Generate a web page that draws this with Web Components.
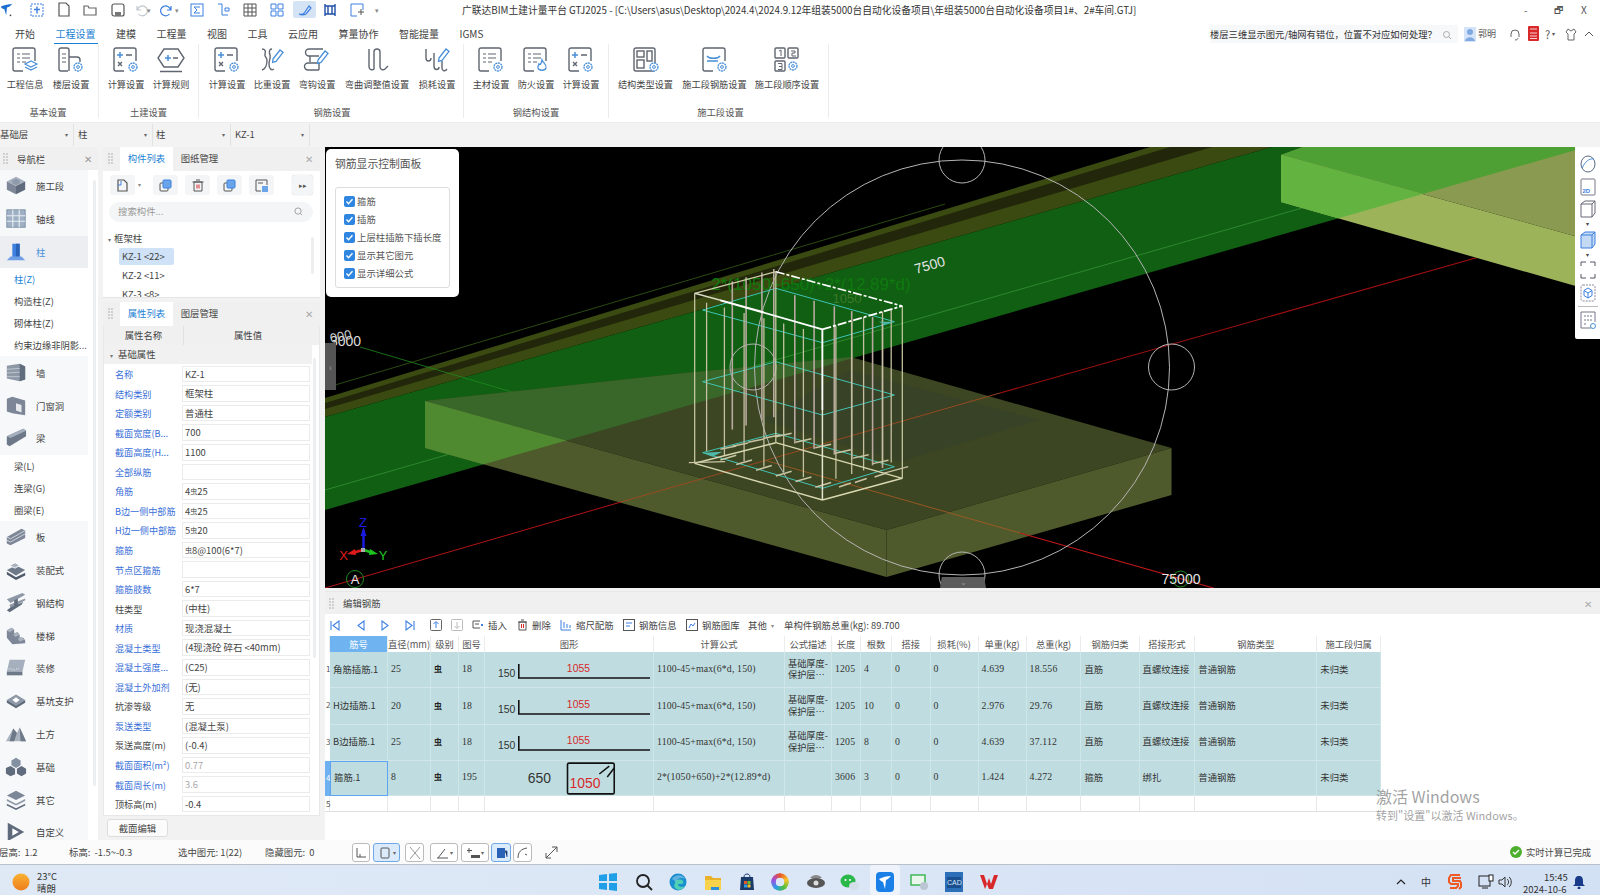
<!DOCTYPE html>
<html lang="zh">
<head>
<meta charset="utf-8">
<title>GTJ2025</title>
<style>
  html, body { margin: 0; padding: 0; height: 100%; overflow: hidden; background: #f2f2f2; }
  body { font: 9.4px "Noto Sans CJK SC", "Noto Sans", sans-serif; color: #444; }
</style>
</head>
<body>
<gtj-app></gtj-app>
<script>
// shared drawing bits
const GREY = '#5f6670', BLUE = '#4a90d9';
const gear = (x, y) => `<circle cx="${x}" cy="${y}" r="4" fill="#fff" stroke="${BLUE}" stroke-width="1.3" stroke-dasharray="2 .6"/><circle cx="${x}" cy="${y}" r="1.4" fill="none" stroke="${BLUE}"/>`;
const pen = (x, y) => `<path d="M${x} ${y}l7-9 3 2.4-7 9-3.4 1z" fill="#fff" stroke="${BLUE}" stroke-width="1.3"/>`;
const docBox = (w = 22) => `<path d="M${w - 10} 24H4a2 2 0 0 1-2-2V3a2 2 0 0 1 2-2h${w - 4}a2 2 0 0 1 2 2v11" fill="none" stroke="${GREY}" stroke-width="1.4"/>`;
const lines = `<path d="M6 7h3M11 7h8M6 11h3M11 11h8M6 15h3M11 15h4" stroke="${GREY}" stroke-width="1.2"/>`;
const calc = `<path d="M5 8h6M8 5v6" stroke="${BLUE}" stroke-width="1.5"/><path d="M14 8h6M6 15l4 4M10 15l-4 4" stroke="${GREY}" stroke-width="1.4"/>`;
const stroke = `fill="none" stroke="${GREY}" stroke-width="1.4"`;
const grip = `<svg class="gp" width="5" height="11" viewBox="0 0 5 11"><path d="M1 1h0M4 1h0M1 4h0M4 4h0M1 7h0M4 7h0M1 10h0M4 10h0" stroke="#999" stroke-width="1.4" stroke-linecap="round"/></svg>`;
const RIBBON_ICONS = {
  info: docBox() + lines + `<path d="M20 14l6 3-6 3-6-3zM14 20l6 3 6-3" fill="#fff" stroke="${BLUE}" stroke-width="1.2"/>`,
  floor: `<path d="M11 24H4a2 2 0 0 1-2-2V3a2 2 0 0 1 2-2h6a2 2 0 0 1 2 2v21M12 10h8a3 3 0 0 1 3 3v2" ${stroke}/><path d="M5 7h4M5 11h4M5 15h4" stroke="${GREY}" stroke-width="1.2"/>` + gear(21, 20),
  calc: docBox() + calc + gear(21, 20),
  rule: `<path d="M7 2h14l6 9-6 9H7L1 11z" ${stroke}/><path d="M8 11h6M11 8v6" stroke="${BLUE}" stroke-width="1.5"/><path d="M16 11h5M3 24.500h22" stroke="${GREY}" stroke-width="1.4"/>`,
  weight: `<path d="M4 2c3 0 4 2 3 5-1 3 2 3 2 6 0 3-1 9-5 10M14 2c-3 0-3 3-2 6s-1 5-1 9 2 7 5 5" ${stroke}/>` + pen(15, 12),
  hook: `<path d="M20 2H6a3 3 0 0 0 0 7h10M7 9v6M16 23H5a3 3 0 0 1 0-7h12M16 16v7" ${stroke}/>` + pen(15, 13),
  bend: `<path d="M6 2v18a3 3 0 0 0 5 2V5a3 3 0 1 1 6 0v15a3 3 0 0 0 5 2l3-3" ${stroke}/>`,
  loss: `<path d="M3 2v9c0 4 5 4 5 0M11 6v13c0 5 5 4 5 1M19 14v7c0 3 3 4 5 1" ${stroke}/>` + pen(16, 11),
  main: docBox() + lines + gear(21, 20),
  fire: docBox() + lines + `<path d="M20 13c1 3 5 4 4 8-1 3-7 3-8 0-.500-2 1-3 1-4 1 1 2 1 3-4z" fill="#fff" stroke="${BLUE}" stroke-width="1.3"/>`,
  struct: `<rect x="2" y="1" width="21" height="23" rx="2" ${stroke}/><rect x="5" y="4" width="7" height="6" ${stroke}/><rect x="15" y="4" width="5" height="10" ${stroke}/><rect x="5" y="13" width="7" height="8" ${stroke}/>` + gear(22, 20),
  seg: docBox() + `<path d="M6 9c2 3 11 3 13 0M6 14h11" stroke="${BLUE}" stroke-width="1.4" fill="none"/>` + gear(21, 20),
  order: `<rect x="2" y="1" width="10" height="10" rx="1" ${stroke}/><rect x="15" y="1" width="10" height="10" rx="1" ${stroke}/><rect x="2" y="14" width="10" height="10" rx="1" ${stroke}/><path d="M6 4l2-1v6M18 4h4v2h-3v3h4M5 16.500h4v3h-3M6 19.500h3v3H5" fill="none" stroke="${GREY}"/>` + gear(20, 19)
};

// isometric little pictures of the nav list
const iso = (top, l, r, d = '') => `<path d="M12 2l10 5-10 5L2 7z" fill="${top}"/><path d="M2 7l10 5v9L2 16z" fill="${l}"/><path d="M22 7l-10 5v9l10-5z" fill="${r}"/>${d}`;
const NAV_ICONS = {
  seg: iso('#a5afbd', '#7d8797', '#5f6a7c', '<path d="M8 6l4-2 4 2v3l-4 2-4-2z" fill="#8e9aaa"/>'),
  axis: '<rect x="2" y="2" width="20" height="19" fill="#9fb0c4" stroke="#7d8da3"/><path d="M2 8.500h20M2 14.500h20M8.500 2v19M15.500 2v19" stroke="#e8edf3" stroke-width="1.2"/>',
  col: '<path d="M8 3h8v15H8z" fill="#3d80e0"/><path d="M12 3h4v15h-4z" fill="#2a62b8"/><path d="M2 21l4-4h12l4 4z" fill="#6e9fe6"/>',
  wall: '<path d="M2 4l14-2 6 3v14l-6 2-14-3z" fill="#8d97a6"/><path d="M16 2l6 3v14l-6 2z" fill="#616c7d"/><path d="M2 8l14-1M2 12l14-1M2 16l14 0" stroke="#c2c9d3"/>',
  door: '<path d="M2 4l6-2v18l-6-2zM8 2l14 4v16L8 20z" fill="#7c8696"/><path d="M12 9l6 2v8l-6-2z" fill="#e6e9ee"/>',
  beam: '<path d="M2 10L20 2l3 2v6L5 21l-3-2z" fill="#6d7888"/><path d="M2 10L20 2l3 2L6 12z" fill="#a5afbd"/>',
  slab: '<path d="M2 12L18 3l4 2v8L6 21l-4-2z" fill="#7d8797"/><path d="M2 12l4 2 16-9M2 15.500l4 2 16-9" stroke="#d4d9e0" fill="none"/>',
  pre: '<path d="M2 12l10-5 10 5-10 6z" fill="#6d7888"/><path d="M5 7l6-3 5 3-5 3z" fill="#aab3bf" stroke="#fff"/><path d="M2 14l10 6 10-5v3l-10 5-10-6z" fill="#4f5a6b"/>',
  steel: '<path d="M2 8L19 1l3 2L6 12zM5 14L22 7v2L6 18z" fill="#8d97a6"/><path d="M10 9l4-2v8l-4 2zM2 20l4-3 14-6-2 3-13 8z" fill="#616c7d"/>',
  stair: '<path d="M2 6l5-3 3 2v4l4-1 2 3v3l4 0 2 3v3L8 21 2 14z" fill="#7d8797"/><path d="M2 6l5-3 3 2-5 3zM9 10l4-2 3 3-5 2zM14 15l4-2 3 3-5 2z" fill="#aab3bf"/>',
  fit: '<path d="M5 3h17l-3 13H2z" fill="#a5afbd"/><path d="M2 16h17v4H2z" fill="#6d7888"/><path d="M4 13h3M8 14h3M12 13h3" stroke="#e8edf3" stroke-dasharray="1 1"/>',
  pit: '<path d="M2 11l10-6 10 6-10 6z" fill="#8d97a6"/><path d="M8 11l4-3 4 3-4 3z" fill="#fff"/><path d="M2 11v3l10 6 10-6v-3l-10 6z" fill="#5f6a7c"/>',
  earth: '<path d="M1 20L9 6l4 5 3-6 7 15z" fill="#aab3bf"/><path d="M9 6l4 5-3 9H5zM16 5l7 15h-6z" fill="#6d7888"/>',
  base: '<path d="M12 2l5 3v5l-5 3-5-3V5z" fill="#8390a2"/><path d="M6 11l5 3v6l-5 2-5-3v-6zM18 11l5 3v5l-5 3-5-3v-5z" fill="#606c7e"/>',
  other: '<path d="M12 2l10 5-10 5L2 7z" fill="#7d8797"/><path d="M2 11l10 5 10-5v2l-10 5-10-5z" fill="#8e9aaa"/><path d="M2 16l10 5 10-5v2l-10 5-10-5z" fill="#5f6a7c"/>',
  custom: '<path d="M3 2l18 10L3 22z" fill="#5f6a7c"/><path d="M8 8l7 4-7 4z" fill="#fff"/>'
};

class Base extends HTMLElement {
  constructor() {
    super();
    this.attachShadow({ mode: 'open' });
  }
  connectedCallback() {
    this.shadowRoot.innerHTML = this.render();
  }
}
const attr = (o, n, d = '') => o.getAttribute(n) || d;

class GtjApp extends Base {
  render() {
    return `<style>
      :host { display: grid; width: 1600px; height: 895px; grid-template-rows: 22px 22px 78px 25px 693px 25px 30px; }
      .main { display: flex; gap: 5px; min-height: 0; }
      .mid { display: flex; flex-direction: column; width: 217px; gap: 4px; }
      .right { display: flex; flex-direction: column; flex: 1; gap: 3px; min-width: 0; }
    </style>
    <title-bar></title-bar>
    <ribbon-tabs></ribbon-tabs>
    <ribbon-bar>
      <rb-group label="基本设置" pad="2 4">
        <rb-item w="46" icon="info" label="工程信息"></rb-item>
        <rb-item w="46" icon="floor" label="楼层设置"></rb-item>
      </rb-group>
      <rb-group label="土建设置" pad="4.500 4.500">
        <rb-item w="45" icon="calc" label="计算设置"></rb-item>
        <rb-item w="45" icon="rule" label="计算规则"></rb-item>
      </rb-group>
      <rb-group label="钢筋设置" pad="5.500 3.500">
        <rb-item w="45" icon="calc" label="计算设置"></rb-item>
        <rb-item w="45" icon="weight" label="比重设置"></rb-item>
        <rb-item w="45" icon="hook" label="弯钩设置"></rb-item>
        <rb-item w="75" icon="bend" label="弯曲调整值设置"></rb-item>
        <rb-item w="45" icon="loss" label="损耗设置"></rb-item>
      </rb-group>
      <rb-group label="钢结构设置" pad="4.500 4">
        <rb-item w="45" icon="main" label="主材设置"></rb-item>
        <rb-item w="45" icon="fire" label="防火设置"></rb-item>
        <rb-item w="45" icon="calc" label="计算设置"></rb-item>
      </rb-group>
      <rb-group label="施工段设置" pad="6 6" shift="2.500">
        <rb-item w="62" icon="struct" label="结构类型设置"></rb-item>
        <rb-item w="76" icon="seg" label="施工段钢筋设置"></rb-item>
        <rb-item w="69" icon="order" label="施工段顺序设置"></rb-item>
      </rb-group>
    </ribbon-bar>
    <selector-bar></selector-bar>
    <div class="main">
      <nav-panel></nav-panel>
      <div class="mid">
        <comp-panel></comp-panel>
        <prop-panel></prop-panel>
      </div>
      <div class="right">
        <view-3d></view-3d>
        <rebar-editor></rebar-editor>
      </div>
    </div>
    <status-bar></status-bar>
    <task-bar></task-bar>`;
  }
}

const QUICK = [
  [37, `<rect x="2" y="2" width="12" height="12" fill="none" stroke="#3d80e0" stroke-dasharray="2 1"/><path d="M8 4.500v7M5 7.500h6" stroke="#3d80e0" stroke-width="1.4"/>`],
  [64, `<path d="M3 1h7l3 3v10H3z" fill="none" stroke="#555" stroke-width="1.2"/>`],
  [90, `<path d="M2 4h4l1 2h7v7H2z" fill="none" stroke="#666" stroke-width="1.2"/>`],
  [118, `<rect x="2" y="2" width="12" height="12" rx="2" fill="none" stroke="#555" stroke-width="1.2"/><path d="M5 10h6v4H5z" fill="#777"/>`],
  [141, `<path d="M4 4v4h4M4.500 8a5 5 0 1 1 1 4" fill="none" stroke="#c2c7cf" stroke-width="1.2"/>`],
  [167, `<path d="M12 4v4H8M11.500 8a5 5 0 1 0-1 4" fill="none" stroke="#3d80e0" stroke-width="1.2"/>`],
  [197, `<rect x="2" y="2" width="12" height="12" fill="none" stroke="#3d80e0"/><path d="M11 5H5l3 3-3 3h6" fill="none" stroke="#3d80e0"/>`],
  [223, `<path d="M3 2h4v11h6M10 6h4v3h-4z" fill="none" stroke="#3d80e0"/>`],
  [250, `<path d="M2 2h12v12H2zM2 6h12M2 10h12M6 2v12M10 2v12" fill="none" stroke="#555"/>`],
  [277, `<path d="M2 2h5v5H2zM9 2h5v5H9zM2 9h5v5H2zM9 9h5v5H9z" fill="none" stroke="#3d80e0"/>`],
  [304, `<path d="M3 12c3 1 5 0 6-2l4-6 2 2-5 6c-2 1-5 1-7 0z" fill="none" stroke="#3d80e0" stroke-width="1.2"/>`],
  [330, `<path d="M3 2v12M13 2v12M3 4h10M3 12h10M6 4v8M10 4v8" fill="none" stroke="#1f4fa8" stroke-width="1.4"/>`],
  [357, `<path d="M2 2h12v6M2 2v12h6" fill="none" stroke="#3d80e0"/><path d="M9 10h6M12 7v6" stroke="#555"/>`]
];
class TitleBar extends Base {
  render() {
    const btn = QUICK.map(q => `<svg style="left:${q[0] - 8}px" viewBox="0 0 16 16" width="16" height="16">${q[1]}</svg>`).join('');
    return `<style>
      :host { display: block; position: relative; background: #fff; height: 22px; }
      svg { position: absolute; top: 2px; }
      .act { position: absolute; left: 293px; top: 1px; width: 23px; height: 17px; background: #d5e4f5; border-radius: 2px; }
      .title { position: absolute; left: 462px; top: 3px; font-size: 9.750px; line-height: 14px; white-space: nowrap; color: #333; }
      .win { position: absolute; top: 3px; font-size: 10px; line-height: 13px; color: #555; }
      .c { position: absolute; top: 5px; font-size: 7px; color: #888; }
    </style>
    <div class="act"></div>
    <svg style="left:0" viewBox="0 0 16 16" width="14" height="16"><path d="M1 4c4-2 9-3 13-3l-3 3-3 1-1 9-2-7-3-1z" fill="#1b6fd0"/><circle cx="12" cy="14" r="1" fill="#444"/></svg>
    ${btn}
    <span class="c" style="left:147px">▾</span><span class="c" style="left:175px">▾</span><span class="c" style="left:375px">▾</span>
    <span class="title">广联达BIM土建计量平台 GTJ2025 - [C:\\Users\\asus\\Desktop\\2024.4\\2024.9.12年组装5000台自动化设备项目\\年组装5000台自动化设备项目1#、2#车间.GTJ]</span>
    <span class="win" style="left:1524px">-</span><span class="win" style="left:1554px">🗗</span><span class="win" style="left:1581px">X</span>`;
  }
}

class RibbonTabs extends Base {
  render() {
    const tabs = ['开始', '工程设置', '建模', '工程量', '视图', '工具', '云应用', '算量协作', '智能提量', 'IGMS'];
    return `<style>
      :host { display: flex; align-items: center; background: #fff; height: 22px; padding-left: 15px; font-size: 10px; color: #444; position: relative; }
      .tabs { display: flex; gap: 20.500px; flex: 1; align-items: center; height: 100%; }
      .t { position: relative; line-height: 22px; padding-top: 1px; box-sizing: border-box; height: 22px; white-space: nowrap; }
      .on { color: #1a7fd4; }
      .on::after { content: ""; position: absolute; left: -2px; right: -2px; bottom: 0; height: 1.500px; background: #1a7fd4; }
      .help { position: absolute; left: 1210px; top: 3px; height: 18px; width: 248px; background: #f7f8fa; font-size: 9.300px; line-height: 18px; color: #333; white-space: nowrap; }
      .r { position: absolute; top: 5px; font-size: 10px; line-height: 14px; color: #555; }
    </style>
    <div class="tabs">${tabs.map((t, i) => `<span class="t ${i === 1 ? 'on' : ''}">${t}</span>`).join('')}</div>
    <div class="help">楼层三维显示图元/轴网有错位，位置不对应如何处理？</div>
    <svg style="position:absolute;left:1442px;top:8px" width="10" height="10" viewBox="0 0 10 10"><circle cx="4.500" cy="4.500" r="3" fill="none" stroke="#aaa"/><path d="M7 7l2 2" stroke="#aaa"/></svg>
    <svg style="position:absolute;left:1464px;top:5px" width="12" height="15" viewBox="0 0 12 15"><rect width="12" height="15" fill="#d5e4f8"/><circle cx="6" cy="5" r="3" fill="#7fa9e0"/><path d="M1 14c1-5 9-5 10 0z" fill="#7fa9e0"/></svg>
    <span class="r" style="left:1478px;font-size:9px">郭明</span>
    <svg style="position:absolute;left:1509px;top:6px" width="12" height="13" viewBox="0 0 12 13"><path d="M2 9V6a4 4 0 0 1 8 0v3M9 10c0 1-1 2-3 2" fill="none" stroke="#666"/></svg>
    <svg style="position:absolute;left:1528px;top:4px" width="11" height="15" viewBox="0 0 11 15"><rect width="11" height="15" rx="1" fill="#d8282a"/><path d="M2 3h7M2 7h7M2 10h7M2 12.500h7" stroke="#fff" stroke-width=".8"/></svg>
    <span class="r" style="left:1545px;font-size:11px">?</span><span class="r" style="left:1552px;font-size:6px">▾</span>
    <svg style="position:absolute;left:1565px;top:6px" width="12" height="13" viewBox="0 0 12 13"><path d="M3 1l3 2 3-2 2 3-2 2v6H3V6L1 4z" fill="none" stroke="#666"/></svg>
    <svg style="position:absolute;left:1584px;top:8px" width="10" height="7" viewBox="0 0 10 7"><path d="M1 6l4-4 4 4" fill="none" stroke="#555"/></svg>`;
  }
}

class RibbonBar extends Base {
  render() {
    return `<style>:host { display: flex; background: #fff; height: 78px; }</style><slot></slot>`;
  }
}

class RbGroup extends Base {
  render() {
    const [l, r] = attr(this, 'pad', '4 4').split(' ');
    return `<style>
      :host { display: grid; grid-template-rows: 61px 13px; height: 74px; border-right: 1px solid #ececec; padding: 0 ${r}px 0 ${l}px; box-sizing: content-box; }
      .items { display: flex; }
      .lab { text-align: center; font-size: 9.300px; line-height: 15px; color: #555; white-space: nowrap; padding-left: ${attr(this, 'shift', '0') * 2}px; }
    </style>
    <div class="items"><slot></slot></div>
    <div class="lab">${attr(this, 'label')}</div>`;
  }
}

class RbItem extends Base {
  render() {
    return `<style>
      :host { display: flex; flex-direction: column; align-items: center; width: ${attr(this, 'w', '45')}px; }
      svg { display: block; margin-top: 3px; }
      span { margin-top: 4px; font-size: 9.200px; line-height: 14px; white-space: nowrap; color: #444; }
    </style>
    <svg viewBox="0 0 28 26" width="28" height="26">${RIBBON_ICONS[attr(this, 'icon')]}</svg>
    <span>${attr(this, 'label')}</span>`;
  }
}

class SelectorBar extends Base {
  render() {
    const cells = [['基础层', 74, -1], ['柱', 79, 4], ['柱', 78, 3], ['KZ-1', 79, 4]];
    return `<style>
      :host { display: flex; background: #f3f3f3; height: 25px; align-items: center; font-size: 9.400px; border-top: 1px solid #ededed; box-sizing: border-box; }
      .c { display: flex; align-items: center; justify-content: space-between; height: 22px; box-sizing: border-box; border-right: 1px solid #e2e2e2; padding-right: 5px; padding-bottom: 2px; }
      i { font-style: normal; font-size: 6px; color: #666; }
    </style>
    ${cells.map(c => `<div class="c" style="width:${c[1]}px;padding-left:${c[2]}px"><span>${c[0]}</span><i>▾</i></div>`).join('')}`;
  }
}

class NavPanel extends Base {
  render() {
    const rows = [
      ['seg', '施工段'], ['axis', '轴线'], ['col', '柱', 1],
      [0, '柱(Z)', 1], [0, '构造柱(Z)'], [0, '砌体柱(Z)'], [0, '约束边缘非阴影...'],
      ['wall', '墙'], ['door', '门窗洞'], ['beam', '梁'],
      [0, '梁(L)'], [0, '连梁(G)'], [0, '圈梁(E)'],
      ['slab', '板'], ['pre', '装配式'], ['steel', '钢结构'], ['stair', '楼梯'], ['fit', '装修'],
      ['pit', '基坑支护'], ['earth', '土方'], ['base', '基础'], ['other', '其它'], ['custom', '自定义']
    ];
    const list = rows.map(r => r[0]
      ? `<div class="it ${r[2] ? 'on' : ''}"><svg viewBox="0 0 24 24" width="22" height="22">${NAV_ICONS[r[0]]}</svg><span>${r[1]}</span></div>`
      : `<div class="sub ${r[2] ? 'blue' : ''}">${r[1]}</div>`).join('');
    return `<style>
      :host { display: flex; flex-direction: column; width: 98px; background: #fff; height: 693px; overflow: hidden; }
      .hd { display: flex; align-items: center; height: 23px; background: #f0f0f0; flex: none; }
      .gp { margin: 0 9px 0 3px; flex: none; }
      .x { margin-left: auto; margin-right: 6px; color: #999; font-size: 10px; }
      .body { display: flex; flex: 1; min-height: 0; }
      .list { width: 88px; overflow: hidden; }
      .it { height: 32.800px; display: flex; align-items: center; background: #f7f8fa; color: #444; }
      .it svg { margin: 0 9px 0 5px; flex: none; }
      .on { background: #eceef2; }
      .on span { color: #4a90d9; }
      .sub { height: 22px; line-height: 22px; padding-left: 14px; white-space: nowrap; background: #fff; font-size: 9.300px; }
      .blue { color: #1a7fd4; }
      .track { position: relative; flex: 1; }
      .track::after { content: ""; position: absolute; left: 5px; width: 3px; top: 10px; height: 606px; background: #eceef0; border-radius: 2px; }
    </style>
    <div class="hd">${grip}<span>导航栏</span><span class="x">✕</span></div>
    <div class="body"><div class="list">${list}</div><div class="track"></div></div>`;
  }
}

// header with grip, two tabs and a close cross; the panels below use it
class PanelHead extends Base {
  render() {
    return `<style>
      :host { display: flex; align-items: stretch; height: 24px; background: #f0f0f0; font-size: 9.400px; flex: none; }
      .gp { margin: 6px 7px 0 5px; flex: none; }
      .t { width: 53px; text-align: center; line-height: 23px; }
      .on { background: #fff; color: #1a7fd4; }
      .x { margin-left: auto; margin-right: 7px; color: #aaa; font-size: 10px; line-height: 23px; }
    </style>
    ${grip}<div class="t on">${attr(this, 'a')}</div><div class="t">${attr(this, 'b')}</div><span class="x">✕</span>`;
  }
}

function tool(t) {
  return `<svg width="13" height="13" viewBox="0 0 13 13">${t}</svg>`;
}

class CompPanel extends Base {
  render() {
    const tools = [
      `<path d="M2 1h6l3 3v8H2z" fill="none" stroke="#555" stroke-width="1.200"/><path d="M2 6h3V2" stroke="#3d80e0" fill="none"/>`,
      `<rect x="1" y="4" width="8" height="8" rx="1" fill="none" stroke="#555"/><rect x="4" y="1" width="8" height="8" rx="1" fill="#6aa5ea" stroke="#3d80e0"/>`,
      `<path d="M3 3h8v9H3zM1.500 3h11M5 1h4" fill="none" stroke="#555"/><path d="M6 5.500v4M8 5.500v4" stroke="#d8282a"/>`,
      `<rect x="1" y="4" width="8" height="8" rx="1" fill="none" stroke="#555"/><rect x="4" y="1" width="8" height="8" rx="1" fill="#6aa5ea" stroke="#3d80e0"/>`,
      `<path d="M1 1h11v5M1 1v11h5M3 4h5" fill="none" stroke="#555"/><rect x="7" y="7" width="6" height="6" fill="#6aa5ea"/>`
    ];
    return `<style>
      :host { display: flex; flex-direction: column; height: 151px; background: #fff; overflow: hidden; border-bottom: 1px solid #e5e5e5; box-sizing: border-box; position: relative; }
      .bar { display: flex; height: 20px; margin: 4px 0 0 7px; flex: none; }
      .b { display: flex; align-items: center; justify-content: center; width: 25px; height: 20px; background: #f4f5f6; border-radius: 3px; flex: none; }
      .cr { width: 18px; flex: none; font-size: 6px; color: #888; line-height: 20px; padding-left: 3px; box-sizing: border-box; }
      .s { height: 19.500px; margin: 7px 7px 0 6px; background: #f4f5f6; border-radius: 10px; color: #999; line-height: 19px; padding-left: 9px; position: relative; flex: none; }
      .s svg { position: absolute; right: 10px; top: 5px; }
      .tree { margin-top: 9px; }
      .g { padding-left: 5px; line-height: 14px; }
      .g i { font-style: normal; font-size: 6px; color: #777; margin-right: 3px; }
      .n { height: 16.500px; line-height: 16.500px; margin: 2.500px 0 0 16px; width: 55px; padding-left: 3px; box-sizing: border-box; border-radius: 2px; white-space: nowrap; }
      .sel { background: #cfe2f7; margin-top: 1.500px; }
      .n.last { height: 8px; line-height: 8px; margin-top: 6px; }
      .thumb { position: absolute; right: 6px; top: 90px; width: 3px; height: 37px; background: #eceef0; border-radius: 2px; }
    </style>
    <panel-head a="构件列表" b="图纸管理"></panel-head>
    <div class="bar">
      <div class="b">${tool(tools[0])}</div><span class="cr">▾</span>
      <div class="b" style="margin-right:7px">${tool(tools[1])}</div>
      <div class="b" style="margin-right:7px">${tool(tools[2])}</div>
      <div class="b" style="margin-right:7px">${tool(tools[3])}</div>
      <div class="b" style="margin-right:18px">${tool(tools[4])}</div>
      <div class="b" style="width:21px;font-size:7px;color:#555;box-shadow:0 0 1px #bbb">▸▸</div>
    </div>
    <div class="s">搜索构件...<svg width="9" height="9" viewBox="0 0 10 10"><circle cx="4.500" cy="4.500" r="3.500" fill="none" stroke="#999"/><path d="M7 7l2 2" stroke="#999"/></svg></div>
    <div class="tree">
      <div class="g"><i>▾</i>框架柱</div>
      <div class="n sel">KZ-1 &lt;22&gt;</div>
      <div class="n">KZ-2 &lt;11&gt;</div>
      <div class="n last">KZ-3 &lt;8&gt;</div>
    </div>
    <div class="thumb"></div>`;
  }
}

class PropPanel extends Base {
  render() {
    const rows = [
      ['名称', 'KZ-1', 'b'], ['结构类别', '框架柱', 'b'], ['定额类别', '普通柱', 'b'], ['截面宽度(B...', '700', 'b'],
      ['截面高度(H...', '1100', 'b'], ['全部纵筋', '', 'b'], ['角筋', '4<s>虫</s>25', 'b'], ['B边一侧中部筋', '4<s>虫</s>25', 'b'],
      ['H边一侧中部筋', '5<s>虫</s>20', 'b'], ['箍筋', '<s>虫</s>8@100(6*7)', 'b'], ['节点区箍筋', '', 'b'], ['箍筋肢数', '6*7', 'b'],
      ['柱类型', '(中柱)', ''], ['材质', '现浇混凝土', 'b'], ['混凝土类型', '(4现浇砼 碎石 &lt;40mm)', 'b'], ['混凝土强度...', '(C25)', 'b'],
      ['混凝土外加剂', '(无)', 'b'], ['抗渗等级', '无', ''], ['泵送类型', '(混凝土泵)', 'b'], ['泵送高度(m)', '(-0.4)', ''],
      ['截面面积(m²)', '0.77', 'b g'], ['截面周长(m)', '3.6', 'b g'], ['顶标高(m)', '-0.4', '']
    ];
    return `<style>
      :host { display: flex; flex-direction: column; flex: 1; min-height: 0; background: #f2f2f2; }
      .box { height: 490px; background: #fff; position: relative; border: 1px solid #e8e8e8; border-top: 0; box-sizing: border-box; flex: none; }
      .hr { display: grid; grid-template-columns: 79px 129px; height: 19px; background: #f0f0f0; line-height: 19px; text-align: center; color: #444; }
      .hr div + div { border-left: 1px solid #e2e2e2; }
      .sec { width: 208px; height: 19.300px; background: #f1f1f1; line-height: 18px; padding-left: 6px; box-sizing: border-box; }
      .sec i { font-style: normal; font-size: 6px; color: #777; margin-right: 5px; }
      .row { display: grid; grid-template-columns: 78px 127.500px; height: 19.550px; align-items: center; }
      .n { padding-left: 11px; white-space: nowrap; font-size: 9.100px; }
      .b .n { color: #3a6fd8; }
      .v { height: 16.500px; border: 1px solid #ebebeb; line-height: 15px; padding-left: 2px; box-sizing: border-box; font-size: 9.400px; white-space: nowrap; overflow: hidden; }
      .g .v { color: #aaa; }
      s { text-decoration: none; font-size: 7px; position: relative; top: -1px; }
      .thumb { position: absolute; right: 3px; top: 32px; width: 3px; height: 300px; background: #eceef0; border-radius: 2px; }
      .btn { margin: 3px 0 0 4px; width: 61px; height: 18px; border: 1px solid #ddd; border-radius: 3px; background: #fbfbfb; text-align: center; line-height: 17px; box-sizing: border-box; }
    </style>
    <panel-head a="属性列表" b="图层管理"></panel-head>
    <div class="box">
      <div class="hr"><div>属性名称</div><div>属性值</div></div>
      <div class="sec"><i>▾</i>基础属性</div>
      ${rows.map(r => `<div class="row ${r[2]}"><div class="n">${r[0]}</div><div class="v">${r[1]}</div></div>`).join('')}
      <div class="thumb"></div>
    </div>
    <div class="btn">截面编辑</div>`;
  }
}

class View3d extends Base {
  render() {
    // the source of these numbers is the zoomed crops: px/py turn crop coordinates into page ones
    const px = x => +(325 + x / 2.529).toFixed(1), py = y => +(140 + y / 3).toFixed(1);
    const pts = a => a.map(p => p.join(',')).join(' ');
    const greenBeam = pts([[325, 417], [1272, 147], [1600, 147], [1600, 143], [325, 510]]);
    const poly = (a, fill, extra = '') => `<polygon points="${pts(a)}" fill="${fill}" ${extra}/>`;
    const line = (x1, y1, x2, y2, c, w = 1, extra = '') => `<line x1="${x1}" y1="${y1}" x2="${x2}" y2="${y2}" stroke="${c}" stroke-width="${w}" ${extra}/>`;

    // slab: faces over black and, clipped, the lighter part over the beam
    const slabTop = [[425, 401], [685, 373], [851, 357], [1171.5, 448], [886.5, 530]];
    const slabL = [[425, 401], [886.5, 530], [886.5, 577], [425, 448]];
    const slabR = [[886.5, 530], [1171.5, 448], [1171.5, 495], [886.5, 577]];
    const boxFront = [[1281, 155], [1600, 243], [1600, 293], [1281, 202]];
    const boxTop = [[1281, 155], [1303, 147], [1600, 147], [1600, 243]];

    let cage = '';
    const P = [[935, 460], [1140, 395], [1460, 498], [1258, 568]].map(p => [px(p[0]), py(p[1])]);
    const B = [[935, 970], [1140, 908], [1460, 1015], [1258, 1080]].map(p => [px(p[0]), py(p[1])]);
    const loop = (a, c, w) => a.map((p, i) => line(p[0], p[1], a[(i + 1) % 4][0], a[(i + 1) % 4][1], c, w)).join('');
    // stirrups at three heights
    [[[955, 510], [1140, 445], [1440, 545], [1258, 608]], [[955, 725], [1140, 665], [1440, 765], [1258, 825]], [[955, 938], [1140, 880], [1440, 980], [1258, 1045]]].forEach(r => {
      cage += loop(r.map(p => [px(p[0]), py(p[1])]), '#3fc4b4', 1);
    });
    // bars behind
    [1030, 1065, 1105, 1135, 1188, 1237, 1288, 1332, 1385, 1410].forEach(x => {
      const top = x < 1140 ? 445 - (x - 955) * 0.35 : 445 + (x - 1140) * 0.33;
      cage += line(px(x), py(top + 5), px(x), py(top + 450), '#b8a8a0', 1.6);
    });
    // bars in front
    [965, 1010, 1060, 1110, 1160, 1210].forEach(x => {
      const t = 510 + (x - 955) * 0.32;
      cage += line(px(x), py(t - 25), px(x), py(t + 420), '#c4c0a0', 1.3);
    });
    [1292, 1332, 1362, 1410, 1432].forEach(x => {
      const t = 608 - (x - 1258) * 0.35;
      cage += line(px(x), py(t - 40), px(x), py(t + 420), '#c4c0a0', 1.3);
    });
    // hooks at the foot of the bars
    [1000, 1040, 1090, 1140, 1190, 1240].forEach(x => {
      const y = 960 + (x - 1000) * 0.34;
      cage += line(px(x), py(y), px(x + 40), py(y - 14), '#c8c4a4', 1.6);
    });
    [1300, 1340, 1390].forEach(x => {
      const y = 1055 - (x - 1258) * 0.33;
      cage += line(px(x), py(y), px(x + 30), py(y - 12), '#c8c4a4', 1.6);
    });
    [1000, 1030, 1070, 1110, 1140, 1190, 1240, 1290, 1335, 1385].forEach(x => {
      const y = x < 1140 ? 928 - (x - 1000) * 0.3 : 890 + (x - 1140) * 0.33;
      cage += line(px(x), py(y), px(x + 40), py(y - 10), '#c8c4a4', 1.4);
    });
    cage += poly([[px(955), py(938)], [px(1005), py(935)], [px(980), py(950)]], '#4fb8a8');
    cage += poly([[px(1400), py(545)], [px(1440), py(545)], [px(1415), py(553)]], '#4fb8a8');
    // outer box
    cage += loop(B, '#d8d8b0', 1.4);
    [0, 1, 2, 3].forEach(i => { cage += line(P[i][0], P[i][1], B[i][0], B[i][1], i === 3 ? '#e4e4d0' : '#cfcfa8', i === 3 ? 1.500 : 1.200); });
    cage += line(P[0][0], P[0][1], P[1][0], P[1][1], '#cfcfa8', 1.3);
    cage += line(P[0][0], P[0][1], px(1110), py(516), '#d8d8c4', 1.4) + line(px(1000), py(481), P[3][0], P[3][1], '#fff', 1.8);
    cage += line(P[3][0], P[3][1], P[2][0], P[2][1], '#fff', 1.8, 'stroke-dasharray="9 2 3 2"');
    cage += line(P[1][0], P[1][1], P[2][0], P[2][1], '#fff', 1.6, 'stroke-dasharray="9 2 3 2"');
    cage += line(P[3][0], P[3][1], px(1258), py(810), '#fff', 1.6);
    // outrigger ends on the foot
    cage += line(px(920), py(968), px(1012), py(965), '#c8c4a4', 1.2) + line(px(1412), py(1000), px(1475), py(980), '#c8c4a4', 1.2);

    const circ = (x, y, r, c = '#b4b4b4', w = 1) => `<ellipse cx="${x}" cy="${y}" rx="${r}" ry="${r}" fill="none" stroke="${c}" stroke-width="${w}"/>`;
    const checks = ['箍筋', '插筋', '上层柱插筋下插长度', '显示其它图元', '显示详细公式'];

    return `<style>
      :host { display: block; position: relative; height: 441px; background: #000; overflow: hidden; }
      svg.scene { display: block; }
      .ctrl { position: absolute; left: 1px; top: 1.500px; width: 133px; height: 148px; background: #fff; border-radius: 5px; box-sizing: border-box; padding: 7px 9px 0 9px; }
      .ctrl h4 { margin: 0; font-size: 10.800px; font-weight: 400; line-height: 15px; color: #555; }
      .grp { margin-top: 16.500px; height: 101px; border: 1px solid #ddd; border-radius: 3px; box-sizing: border-box; padding: 4px 0 0 7.500px; }
      .ck { display: flex; align-items: center; height: 18px; font-size: 9.400px; color: #555; white-space: nowrap; gap: 2.500px; }
      .ck b { width: 11px; height: 11px; flex: none; background: #2e86e0; border-radius: 2px; }
      .ck svg { display: block; }
      .tb { position: absolute; left: 1250px; top: 0; width: 25px; height: 192px; background: #fff; border-radius: 0 0 0 2px; display: flex; flex-direction: column; align-items: center; }
      .tb svg { flex: none; }
      .tb i { font-style: normal; font-size: 6px; color: #444; line-height: 10px; }
      .tb hr { width: 20px; margin: 3px 0; border: 0; border-top: 1px solid #bbb; }
      .lt { position: absolute; left: 0; top: 196px; width: 11px; height: 47px; background: #555; color: #999; font-size: 10px; line-height: 47px; text-align: center; }
      .bt { position: absolute; left: 615px; top: 430px; width: 46px; height: 11px; background: #5c5c5c; color: #999; font-size: 8px; line-height: 10px; text-align: center; clip-path: polygon(4% 0, 96% 0, 100% 100%, 0 100%); }
    </style>
    <svg class="scene" viewBox="325 147 1275 441" width="1275" height="441">
      <defs>
        <clipPath id="overGreen"><polygon points="${greenBeam}"/></clipPath>
      </defs>
      ${poly([[325, 398], [1150, 147], [1272, 147], [325, 417]], '#3a4a10')}
      ${poly([[325, 403], [1170, 147], [1212, 147], [325, 409]], '#22260a')}
      ${line(325, 388, 945, 204, '#3f6a1a', .7)}
      ${poly(greenBeam.split(' ').map(s => s.split(',')), '#115f13')}
      ${line(325, 490, 1302, 208, '#3a9a3a', .7)}
      ${line(360, 347, 870, 498, '#1f8a1f', .8)}
      ${line(590, 405, 590, 421, '#2f9a2f', .8)}${line(582, 413, 598, 413, '#2f9a2f', .8)}
      ${poly(slabTop, '#3d4622')}
      <g clip-path="url(#overGreen)">${poly(slabTop, '#39672a')}</g>
      ${poly([[850, 370], [1040, 420], [900, 462], [760, 420]], '#35402a', 'opacity=".55"')}
      ${poly(slabL, '#4f5a2c')}${poly(slabR, '#4f5a2c')}
      <g clip-path="url(#overGreen)">${poly(slabL, '#4f8a30')}${poly(slabR, '#4f8a30')}</g>
      ${line(325, 588, 621, 502, '#b01414', 1)}${line(621, 502, 1000, 393, '#a04a20', .9)}${line(1000, 393, 1479, 257, '#a01010', 1.1)}
      ${line(764, 460, 1020, 533, '#a05a24', .9)}${line(1020, 533, 1213.600, 588, '#c01818', 1.1)}
      ${poly(boxTop, '#8a9a50')}<g clip-path="url(#overGreen)">${poly(boxTop, '#4fa034')}</g>
      ${poly(boxFront, '#9cb35a')}<g clip-path="url(#overGreen)">${poly(boxFront, '#62b340')}</g>
      ${circ(962, 367.500, 207.500)}
      ${circ(962, 160, 23)}${circ(1171.500, 367, 23)}${circ(753, 367, 23)}${circ(962, 575, 23)}
      <text x="811" y="290" text-anchor="middle" font-size="17" fill="#0e7a0e" font-family="Liberation Sans">2*(1050+650)+2*(12.89*d)</text>
      <text x="847" y="303" text-anchor="middle" font-size="13" fill="#3d7a2a" font-family="Liberation Sans">1050</text>
      ${cage}
      <text transform="translate(916 274) rotate(-16)" font-size="14" fill="#e4e4e4" font-family="Liberation Sans">7500</text>
      <text x="330" y="346" font-size="14" fill="#ddd" font-family="Liberation Sans">3000</text>
      <text transform="translate(331 343) rotate(-12)" font-size="13" fill="#ccc" font-family="Liberation Sans">000</text>
      ${circ(1180.700, 579, 8, '#1f8a1f')}
      <text x="1181" y="584" text-anchor="middle" font-size="14" fill="#e4e4e4" font-family="Liberation Sans">75000</text>
      ${circ(355, 579, 8.500, '#1f8a1f')}
      <text x="355" y="584" text-anchor="middle" font-size="13" fill="#e8e8e8" font-family="Liberation Sans">A</text>
      <!-- axis gizmo -->
      <path d="M363.500 550V530" stroke="#1a1ae0" stroke-width="2.500"/><path d="M360.500 536l3-9 3 9z" fill="#1a1ae0"/>
      <path d="M363 550l-11 3" stroke="#e01a1a" stroke-width="2.500"/><path d="M355 549l-8 5 9 1z" fill="#e01a1a"/>
      <path d="M364 550l9 3" stroke="#1fc41f" stroke-width="2.500"/><path d="M370 549l8 5-9 1z" fill="#1fc41f"/>
      <rect x="361" y="548" width="4" height="4" fill="#aaa"/>
      <text x="363" y="527" text-anchor="middle" font-size="13" fill="#1a1ae0" font-family="Liberation Sans">Z</text>
      <text x="343.500" y="560" text-anchor="middle" font-size="13" fill="#e01a1a" font-family="Liberation Sans">X</text>
      <text x="383" y="560" text-anchor="middle" font-size="13" fill="#1fc41f" font-family="Liberation Sans">Y</text>
    </svg>
    <div class="lt">‹</div>
    <div class="bt">⌄</div>
    <div class="ctrl">
      <h4>钢筋显示控制面板</h4>
      <div class="grp">
        ${checks.map(c => `<div class="ck"><b><svg width="11" height="11" viewBox="0 0 11 11"><path d="M2.500 5.500l2 2.200 4-4.400" fill="none" stroke="#fff" stroke-width="1.400"/></svg></b>${c}</div>`).join('')}
      </div>
    </div>
    <div class="tb">
      <svg style="margin-top:7px" width="18" height="20" viewBox="0 0 18 20"><ellipse cx="9" cy="10" rx="7" ry="8" fill="none" stroke="#5a6a80"/><path d="M3 14C6 8 10 4 15 5" fill="none" stroke="${BLUE}"/></svg>
      <svg style="margin-top:3px" width="18" height="20" viewBox="0 0 18 20"><rect x="2" y="2" width="14" height="16" rx="1" fill="none" stroke="#778"/><text x="3.500" y="16" font-size="6" fill="#3d80e0" font-family="Liberation Sans" font-weight="700">2D</text></svg>
      <svg style="margin-top:2px" width="18" height="20" viewBox="0 0 18 20"><path d="M2 5l4-3h10v12l-3 4H2zM2 5h11v13M13 5l3-3" fill="none" stroke="#667"/></svg>
      <i>▾</i>
      <svg style="margin-top:1px" width="18" height="20" viewBox="0 0 18 20"><path d="M2 5l4-3h10v12l-3 4H2z" fill="#c4d9f4" stroke="#3d80e0"/><path d="M2 5h11v13M13 5l3-3" fill="none" stroke="#3d80e0"/></svg>
      <i>▾</i>
      <svg width="18" height="20" viewBox="0 0 18 20"><path d="M2 6V2h5M11 2h5v4M16 14v4h-5M7 18H2v-4" fill="none" stroke="#556"/></svg>
      <svg style="margin-top:3px" width="18" height="20" viewBox="0 0 18 20"><rect x="2" y="2" width="14" height="16" rx="2" fill="none" stroke="#889" stroke-dasharray="2 1"/><path d="M9 5l4 2.500v5L9 15l-4-2.500v-5zM5 7.500l4 2.500 4-2.500M9 10v5" fill="none" stroke="#3d80e0"/></svg>
      <hr>
      <svg width="18" height="20" viewBox="0 0 18 20"><path d="M12 18H2V2h14v10" fill="none" stroke="#778"/><path d="M5 6h8M5 10h8M5 14h3" stroke="#778" stroke-dasharray="2 1"/><circle cx="14" cy="16" r="2.500" fill="none" stroke="${BLUE}"/></svg>
    </div>`;
  }
}

class RebarEditor extends Base {
  render() {
    const cols = [5, 58, 43, 28, 26, 169, 131, 47, 29, 31, 38.6, 48, 48, 54.8, 58.2, 55.7, 122.1, 63.6];
    const head = ['', '筋号', '直径(mm)', '级别', '图号', '图形', '计算公式', '公式描述', '长度', '根数', '搭接', '损耗(%)', '单重(kg)', '总重(kg)', '钢筋归类', '搭接形式', '钢筋类型', '施工段归属'];
    const shape = `<svg width="169" height="36" viewBox="0 0 169 36"><text x="13" y="25" font-size="10.500" fill="#333" font-family="Liberation Sans">150</text><path d="M34 12v14h132" fill="none" stroke="#111" stroke-width="1.600"/><text x="94" y="20" text-anchor="middle" font-size="10.500" fill="#d8282a" font-family="Liberation Sans">1055</text></svg>`;
    const stir = `<svg width="169" height="36" viewBox="0 0 169 36"><text x="43" y="23.500" font-size="14" fill="#333" font-family="Liberation Sans">650</text><rect x="83" y="3" width="47" height="31" rx="1.500" fill="none" stroke="#111" stroke-width="1.600"/><path d="M115 14l10-8M123 17l7-9" stroke="#111" stroke-width="1.500"/><text x="85" y="28.500" font-size="14" fill="#d8282a" font-family="Liberation Sans">1050</text></svg>`;
    const D = '基础厚度-<br>保护层…', G = '<s>虫</s>';
    const rows = [
      ['1', '角筋插筋.1', '25', G, '18', shape, '1100-45+max(6*d, 150)', D, '1205', '4', '0', '0', '4.639', '18.556', '直筋', '直螺纹连接', '普通钢筋', '未归类'],
      ['2', 'H边插筋.1', '20', G, '18', shape, '1100-45+max(6*d, 150)', D, '1205', '10', '0', '0', '2.976', '29.76', '直筋', '直螺纹连接', '普通钢筋', '未归类'],
      ['3', 'B边插筋.1', '25', G, '18', shape, '1100-45+max(6*d, 150)', D, '1205', '8', '0', '0', '4.639', '37.112', '直筋', '直螺纹连接', '普通钢筋', '未归类'],
      ['4', '箍筋.1', '8', G, '195', stir, '2*(1050+650)+2*(12.89*d)', '', '3606', '3', '0', '0', '1.424', '4.272', '箍筋', '绑扎', '普通钢筋', '未归类']
    ];
    const serif = new Set([2, 4, 6, 8, 9, 10, 11, 12, 13]);
    const grid = [
      head.map((h, i) => `<div class="h ${i === 1 ? 'hs' : ''}">${h}</div>`).join(''),
      ...rows.map((r, ri) => r.map((c, i) => i === 0
        ? `<div class="no ${ri === 3 ? 'nos' : ''}">${c}</div>`
        : `<div class="d ${serif.has(i) ? 'f' : ''} ${i === 1 && ri === 3 ? 'cur' : ''} ${i === 5 ? 'pic' : ''} ${i === 7 ? 'two' : ''}">${c}</div>`).join('')),
      head.map((h, i) => `<div class="e">${i === 0 ? '5' : ''}</div>`).join('')
    ].join('');
    return `<style>
      :host { display: flex; flex-direction: column; height: 249px; background: #fff; position: relative; }
      .hd { display: flex; align-items: center; height: 23px; background: #f0f0f0; flex: none; border-top: 1px solid #e8e8e8; box-sizing: border-box; }
      .gp { margin: 0 9px 0 4px; flex: none; }
      .x { margin-left: auto; margin-right: 8px; color: #aaa; font-size: 10px; }
      .bar { display: flex; align-items: center; height: 22px; flex: none; position: relative; white-space: nowrap; font-size: 9.400px; color: #444; }
      .bar > * { position: absolute; }
      .tb { display: grid; grid-template-columns: ${cols.join('px ')}px; grid-template-rows: 16.300px 36.200px 36.100px 36px 35.700px 16px; width: 1056px; }
      .h { background: #fff; border-right: 1px solid #ececec; text-align: center; line-height: 16px; font-size: 9.300px; color: #555; white-space: nowrap; }
      .hs { background: #6fb3f0; color: #fff; }
      .no { font-size: 8px; padding: 10px 0 0 1px; line-height: 14px; overflow: visible; background: #fff; color: #555; }
      .nos { background: #6fb0f0; color: #fff; }
      .d { background: #bfdde0; border-right: 1px solid #cfe6e8; border-bottom: 1px solid #d0e6e8; display: flex; align-items: center; padding: 0 0 2px 3px; font-size: 9.400px; color: #333; white-space: nowrap; box-sizing: border-box; min-width: 0; }
      .f { font-family: "Liberation Serif", "Noto Sans CJK SC", serif; font-size: 9.800px; letter-spacing: .15px; }
      .cur { border: 1.500px solid #5da5ee; padding-left: 3px; }
      s { text-decoration: none; font-size: 8px; color: #222; font-weight: 700; }
      .pic { padding: 0; }
      .pic svg { display: block; }
      .two { line-height: 11.500px; white-space: normal; font-size: 9.200px; padding-bottom: 1px; }
      .e { border-right: 1px solid #e8e8e8; border-bottom: 1px solid #e0e0e0; font-size: 8px; line-height: 16px; padding-left: 1px; box-sizing: border-box; color: #555; }
      .wm { position: absolute; left: 1051px; top: 195px; color: rgba(130,130,130,.75); white-space: nowrap; }
      .wm b { display: block; font-weight: 400; font-size: 16px; line-height: 20px; }
      .wm span { font-size: 11px; line-height: 14px; display: block; margin-top: 2px; }
    </style>
    <div class="hd">${grip}<span>编辑钢筋</span><span class="x">✕</span></div>
    <div class="bar">
      <svg style="left:5px" width="10" height="11" viewBox="0 0 10 11"><path d="M1 1v9M9 1L3 5.500 9 10z" fill="none" stroke="#3d80e0" stroke-width="1.100"/></svg>
      <svg style="left:31px" width="10" height="11" viewBox="0 0 10 11"><path d="M8 1L2 5.500 8 10z" fill="none" stroke="#3d80e0" stroke-width="1.100"/></svg>
      <svg style="left:55px" width="10" height="11" viewBox="0 0 10 11"><path d="M2 1l6 4.500L2 10z" fill="none" stroke="#3d80e0" stroke-width="1.100"/></svg>
      <svg style="left:80px" width="10" height="11" viewBox="0 0 10 11"><path d="M9 1v9M1 1l6 4.500L1 10z" fill="none" stroke="#3d80e0" stroke-width="1.100"/></svg>
      <svg style="left:105px" width="12" height="12" viewBox="0 0 12 12"><rect x=".5" y=".5" width="11" height="11" rx="1" fill="none" stroke="#666"/><path d="M6 9V3M3.500 5L6 2.500 8.500 5" fill="none" stroke="#3d80e0"/></svg>
      <svg style="left:126px" width="12" height="12" viewBox="0 0 12 12"><rect x=".5" y=".5" width="11" height="11" rx="1" fill="none" stroke="#bbb"/><path d="M6 3v6M3.500 7L6 9.500 8.500 7" fill="none" stroke="#bbb"/></svg>
      <svg style="left:147px" width="12" height="10" viewBox="0 0 12 10"><path d="M8 1H1v7h7M3 4h4" fill="none" stroke="#555"/><path d="M10 4v2" stroke="#3d80e0" stroke-width="2"/></svg><span style="left:163px">插入</span>
      <svg style="left:192px" width="11" height="12" viewBox="0 0 11 12"><path d="M2 3h7v8H2zM1 3h9M4 1h3" fill="none" stroke="#555"/><path d="M4.500 5v4M6.500 5v4" stroke="#d8282a"/></svg><span style="left:207px">删除</span>
      <svg style="left:235px" width="12" height="12" viewBox="0 0 12 12"><path d="M1 1v10h10M4 3v6M7 5v4M10 6v3" fill="none" stroke="#3d80e0"/></svg><span style="left:251px">缩尺配筋</span>
      <svg style="left:298px" width="12" height="12" viewBox="0 0 12 12"><rect x=".5" y=".5" width="11" height="11" fill="none" stroke="#555"/><path d="M3 4h6M3 7h4" stroke="#3d80e0"/></svg><span style="left:314px">钢筋信息</span>
      <svg style="left:361px" width="12" height="12" viewBox="0 0 12 12"><rect x=".5" y=".5" width="11" height="11" fill="none" stroke="#555"/><path d="M3 9l2-4 2 2 2-3" fill="none" stroke="#3d80e0"/></svg><span style="left:377px">钢筋图库</span>
      <span style="left:423px">其他</span><span style="left:446px;font-size:6px;color:#888">▾</span>
      <span style="left:459px">单构件钢筋总重(kg): 89.700</span>
    </div>
    <div class="tb">${grid}</div>
    <div class="wm"><b>激活 Windows</b><span>转到"设置"以激活 Windows。</span></div>`;
  }
}

class StatusBar extends Base {
  render() {
    const tools = [
      [352, 18, `<path d="M3 2v9h9M6 11V8" fill="none" stroke="#555"/>`],
      [373, 27, `<rect x="3" y="2" width="8" height="10" rx="1" fill="none" stroke="#555"/>`, 1, 1],
      [405, 19, `<path d="M2 1l10 12M12 1L2 13" stroke="#999"/>`],
      [430, 28, `<path d="M2 12h11M3 12l7-9" fill="none" stroke="#555"/>`, 0, 1],
      [461, 28, `<path d="M3 2v5M1 4.500h5" stroke="#555"/><rect x="5" y="9" width="9" height="3" fill="#555"/>`, 0, 1],
      [491, 20, `<rect x="3" y="2" width="8" height="10" fill="#2a62b8"/><path d="M11 5h2v6" stroke="#2a62b8"/>`, 1],
      [513, 19, `<path d="M2 12c0-6 3-9 9-10M9 8l2 1" fill="none" stroke="#555"/>`]
    ];
    return `<style>
      :host { display: block; position: relative; height: 25px; background: #fbfbfb; border-bottom: 1px solid #b9c0c9; box-sizing: border-box; font-size: 9.400px; color: #444; }
      span { position: absolute; top: 5px; line-height: 14px; white-space: nowrap; }
      .t { position: absolute; top: 3px; height: 19px; box-sizing: border-box; border: 1px solid #bbb; border-radius: 3px; display: flex; align-items: center; justify-content: center; background: #fff; gap: 1px; }
      .a { border-color: #6fa8e8; background: #dcebfb; }
      i { font-style: normal; font-size: 6px; color: #666; }
    </style>
    <span style="left:-1px">层高:&nbsp; 1.2</span>
    <span style="left:69px">标高:&nbsp; -1.5~-0.3</span>
    <span style="left:178px">选中图元:&nbsp;1(22)</span>
    <span style="left:265px">隐藏图元:&nbsp; 0</span>
    ${tools.map(t => `<div class="t ${t[3] ? 'a' : ''}" style="left:${t[0]}px;width:${t[1]}px"><svg width="14" height="14" viewBox="0 0 14 14">${t[2]}</svg>${t[4] ? '<i>▾</i>' : ''}</div>`).join('')}
    <svg style="position:absolute;left:545px;top:6px" width="13" height="13" viewBox="0 0 13 13"><path d="M1 12L12 1M7 1h5v5M1 7v5h5" fill="none" stroke="#555"/></svg>
    <svg style="position:absolute;left:1510px;top:6px" width="12" height="12" viewBox="0 0 12 12"><circle cx="6" cy="6" r="6" fill="#4caf2e"/><path d="M3 6l2 2 4-4" fill="none" stroke="#fff" stroke-width="1.400"/></svg>
    <span style="left:1526px;font-size:9.300px">实时计算已完成</span>`;
  }
}

class TaskBar extends Base {
  render() {
    const at = (x, w, h, s) => `<svg style="left:${x - w / 2}px;top:${17 - h / 2}px" width="${w}" height="${h}" viewBox="0 0 ${w} ${h}">${s}</svg>`;
    return `<style>
      :host { display: block; position: relative; height: 30px; background: linear-gradient(90deg, #dfe9f6, #dbe6f6 50%, #d3e1f4); font-size: 9.400px; color: #333; }
      svg { position: absolute; }
      span { position: absolute; line-height: 12px; white-space: nowrap; }
      .ac { position: absolute; left: 870px; top: 0; width: 30px; height: 30px; background: #eef3fb; border-radius: 3px; }
    </style>
    ${at(21, 18, 18, '<defs><linearGradient id="o" x1="0" y1="0" x2="0" y2="1"><stop offset="0" stop-color="#f9b233"/><stop offset="1" stop-color="#ee7d1c"/></linearGradient></defs><circle cx="9" cy="9" r="8.500" fill="url(#o)"/>')}
    <span style="left:37px;top:5px">23°C</span><span style="left:37px;top:17px">晴朗</span>
    ${at(608, 18, 18, '<path d="M0 2l8-1v7H0zM10 .800L18 0v8h-8zM0 10h8v7l-8-1zM10 10h8v8l-8-1z" fill="#1f9fe8"/>')}
    ${at(644, 18, 18, '<circle cx="8" cy="8" r="6" fill="none" stroke="#222" stroke-width="1.800"/><path d="M12 12l5 5" stroke="#222" stroke-width="1.800"/>')}
    ${at(678, 18, 18, '<circle cx="9" cy="9" r="8.500" fill="#1a8fd0"/><path d="M6 10c0-3 5-5 8-2 1 2 0 3-2 3H9c0 3 4 4 7 2-2 4-7 5-10 2-1-1-1-3 0-5z" fill="#4fd0b4"/><path d="M3 6c3-5 11-5 13 0-3-2-8-1-9 3z" fill="#fff" opacity=".3"/>')}
    ${at(713, 18, 18, '<path d="M1 3h6l2 2h8v5H1z" fill="#e8b32a"/><path d="M1 7h16v10H1z" fill="#f7d24a"/><path d="M7 14h8v3H7z" fill="#2a8fd8"/>')}
    ${at(747, 16, 18, '<path d="M2 4h12l1 13H1z" fill="#1a3a6a"/><path d="M5 4c0-4 6-4 6 0" fill="none" stroke="#1a3a6a"/><path d="M5 8h3v3H5z" fill="#e8552a"/><path d="M8.500 8h3v3h-3z" fill="#6fc02a"/><path d="M5 11.500h3v3H5z" fill="#2a9fe8"/><path d="M8.500 11.500h3v3h-3z" fill="#f7c52a"/>')}
    <div style="position:absolute;left:771px;top:8px;width:18px;height:18px;border-radius:50%;background:conic-gradient(#e8552a,#f7c52a,#4fc03a,#2a9fe8,#a04fe0,#e8552a);-webkit-mask:radial-gradient(circle,transparent 33%,#000 36%)"></div>
    ${at(816, 20, 16, '<ellipse cx="10" cy="9" rx="9" ry="5" fill="#555"/><path d="M4 4c3-4 9-4 12 0" fill="#8a8a8a"/><circle cx="10" cy="9" r="2.500" fill="#ddd"/>')}
    ${at(850, 20, 18, '<ellipse cx="8" cy="8" rx="7.500" ry="6.500" fill="#2bb84a"/><ellipse cx="14" cy="13" rx="5" ry="4" fill="#d4dee8"/><circle cx="5.500" cy="7" r="1" fill="#fff"/><circle cx="10" cy="7" r="1" fill="#fff"/>')}
    <div class="ac"></div>
    ${at(885, 18, 20, '<rect width="18" height="20" rx="4" fill="#1b7fe8"/><path d="M3 7c4-2 8-3 12-3l-3 3-2 1-1 9-2-7-2-1z" fill="#fff"/>')}
    ${at(919, 20, 18, '<path d="M2 2h14v10H2z" fill="#e8f6ec" stroke="#3fb85a" stroke-width="1.500"/><circle cx="15" cy="13" r="4" fill="#bcc6d2"/>')}
    ${at(954, 18, 20, '<rect width="18" height="20" fill="#2a6fb8"/><rect x="2" y="5" width="14" height="11" fill="#1a4f90"/>')}
    <span style="left:947px;top:12px;font-size:7px;color:#dfeaf7;font-family:'Liberation Sans'">CAD</span>
    ${at(989, 18, 16, '<path d="M0 1h4l3 9 2-6 2 6 3-9h4l-5 14h-4l-2-5-2 5H5z" fill="#d8282a"/>')}
    ${at(1401, 10, 6, '<path d="M1 5l4-4 4 4" fill="none" stroke="#222" stroke-width="1.200"/>')}
    <span style="left:1421px;top:11px;font-size:10px">中</span>
    ${at(1455, 14, 16, '<path d="M12 1H3L1 4v4l2 2h7v2l-2 2H2M13 4H5v3h7l1 2v4l-2 2" fill="none" stroke="#ee5a24" stroke-width="2"/>')}
    ${at(1486, 16, 16, '<rect x="1" y="2" width="11" height="10" fill="none" stroke="#222"/><path d="M4 14h6" stroke="#222"/><rect x="11" y="1" width="4" height="6" fill="#fff" stroke="#222"/>')}
    ${at(1505, 14, 14, '<path d="M1 5h3l3-3v10l-3-3H1z" fill="none" stroke="#333"/><path d="M9 4c2 1 2 5 0 6M11 2c3 2 3 8 0 10" fill="none" stroke="#333"/>')}
    <span style="left:1544px;top:6px;font-size:9.500px">15:45</span>
    <span style="left:1523px;top:18px;font-size:9.500px">2024-10-6</span>
    ${at(1579, 12, 14, '<path d="M6 1c3 0 4 2 4 5v3l2 2H0l2-2V6c0-3 1-5 4-5z" fill="#1a3a8a"/><circle cx="6" cy="13" r="1.500" fill="#1a3a8a"/>')}`;
  }
}

const defs = {
  'gtj-app': GtjApp, 'title-bar': TitleBar, 'ribbon-tabs': RibbonTabs, 'ribbon-bar': RibbonBar,
  'rb-group': RbGroup, 'rb-item': RbItem, 'selector-bar': SelectorBar, 'nav-panel': NavPanel,
  'panel-head': PanelHead, 'comp-panel': CompPanel, 'prop-panel': PropPanel, 'view-3d': View3d,
  'rebar-editor': RebarEditor, 'status-bar': StatusBar, 'task-bar': TaskBar
};
Object.keys(defs).forEach(k => customElements.define(k, defs[k]));
</script>
</body>
</html>
